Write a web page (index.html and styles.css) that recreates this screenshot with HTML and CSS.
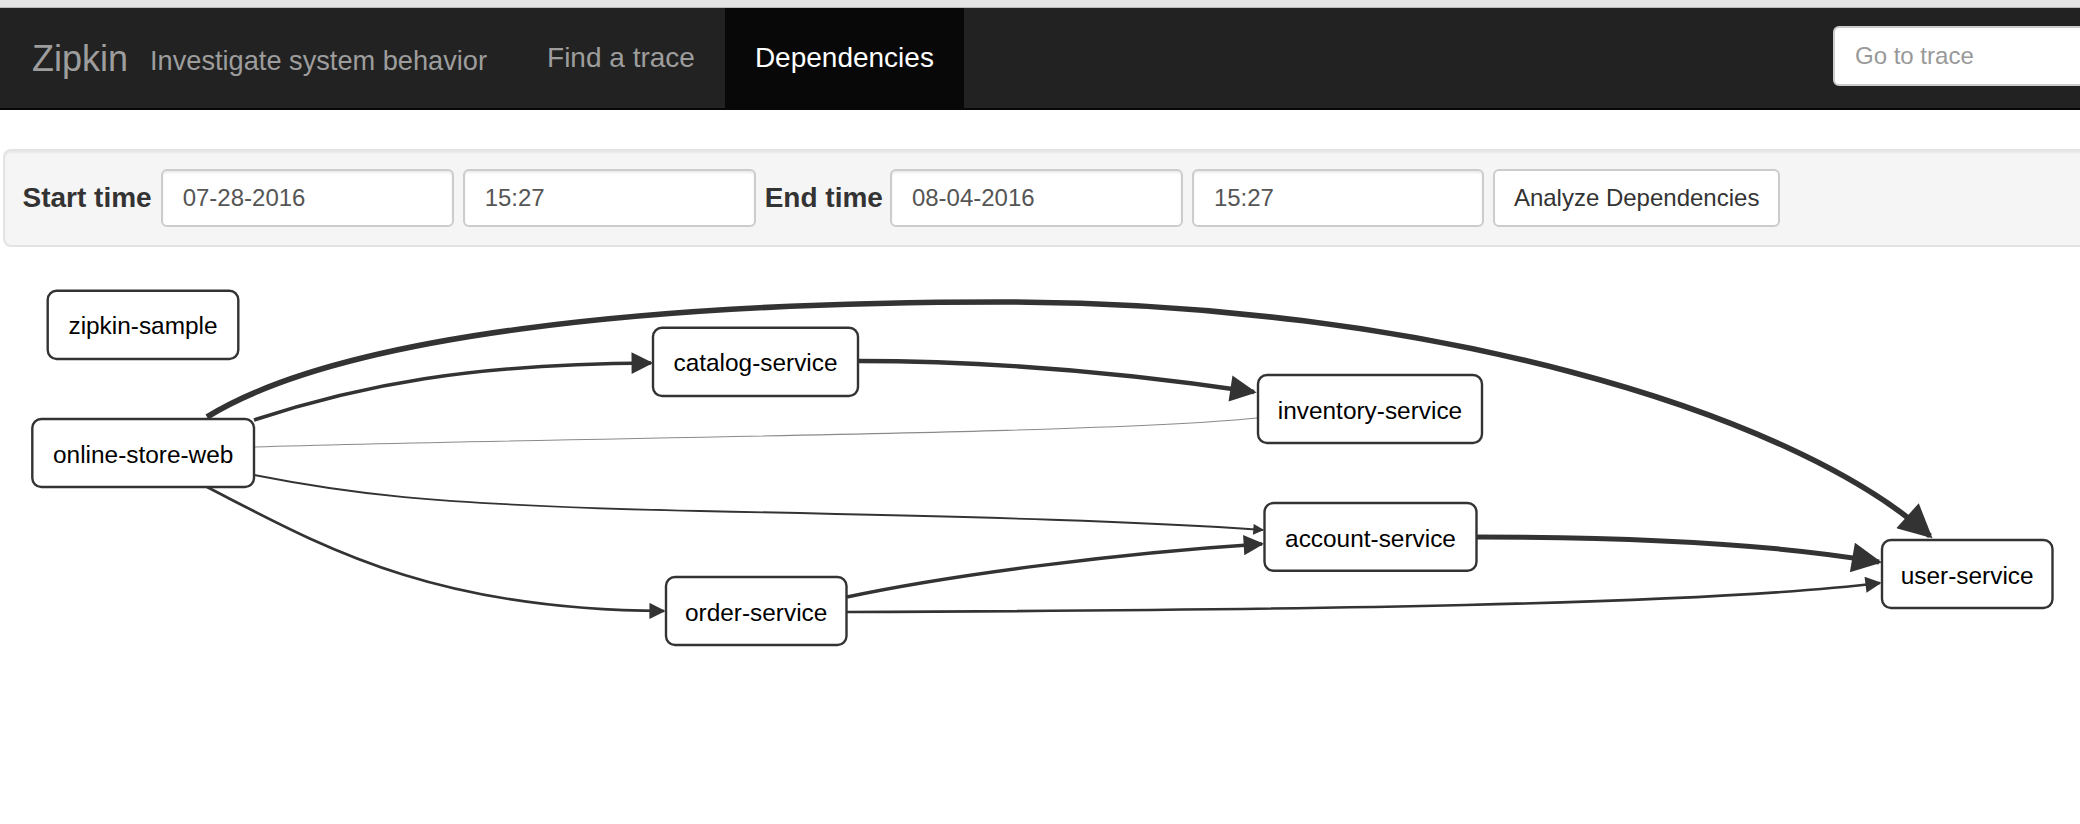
FILE: index.html
```html
<!DOCTYPE html>
<html lang="en">
<head>
<meta charset="utf-8">
<title>Zipkin - Dependencies</title>
<link rel="stylesheet" href="styles.css">
</head>
<body>
<div class="browser-strip"></div>
<nav class="navbar">
  <a class="brand" href="#">Zipkin</a>
  <span class="tagline">Investigate system behavior</span>
  <ul class="nav">
    <li><a href="#">Find a trace</a></li>
    <li class="active"><a href="#">Dependencies</a></li>
  </ul>
  <form class="search">
    <input class="search-input" type="text" placeholder="Go to trace">
  </form>
</nav>
<main class="content">
  <form class="well">
    <label class="field-label">Start time</label>
    <input class="form-control" type="text" value="07-28-2016">
    <input class="form-control" type="text" value="15:27">
    <label class="field-label field-label-end">End time</label>
    <input class="form-control" type="text" value="08-04-2016">
    <input class="form-control form-control-last" type="text" value="15:27">
    <button class="btn" type="button">Analyze Dependencies</button>
  </form>
  <div class="graph">
    <svg class="graph-svg" width="2080" height="577" viewBox="0 247 2080 577">
      <defs>
        <marker id="arrowhead" viewBox="0 0 10 10" refX="9" refY="5" markerUnits="strokeWidth" markerWidth="8" markerHeight="6" orient="auto">
          <path d="M 0 0 L 10 5 L 0 10 z" class="arrow"/>
        </marker>
      </defs>
      <g class="edges">
        <path class="edge" stroke-width="5.6" d="M207,417 C340,335 650,302 1002,302 C1420,302 1790,410 1930,536"/>
        <path class="edge" stroke-width="3.6" d="M254,420 C360,385 470,364 651,363"/>
        <path class="edge" stroke-width="4.4" d="M858,361 C980,361 1120,372 1254,392"/>
        <path class="edge edge-faint" stroke-width="1.1" d="M254,447 C600,437 1100,434 1257,418"/>
        <path class="edge" stroke-width="1.8" d="M254,475 C340,492 420,505 700,511 C1000,517 1150,522 1263,530"/>
        <path class="edge" stroke-width="2.7" d="M207,487 C320,545 430,610 664,611"/>
        <path class="edge" stroke-width="3.4" d="M847,597 C950,575 1120,553 1262,544"/>
        <path class="edge" stroke-width="2.7" d="M847,612 C1300,610 1700,605 1880,583"/>
        <path class="edge" stroke-width="5" d="M1476,537 C1650,537 1780,545 1879,562"/>
      </g>
      <g class="nodes">
        <g class="node">
          <rect x="47.7" y="290.7" width="190.6" height="68.3" rx="9"/>
          <text x="143" y="334">zipkin-sample</text>
        </g>
        <g class="node">
          <rect x="32.3" y="419" width="221.7" height="68" rx="9"/>
          <text x="143.2" y="462.5">online-store-web</text>
        </g>
        <g class="node">
          <rect x="653" y="327.7" width="205" height="68.3" rx="9"/>
          <text x="755.5" y="371">catalog-service</text>
        </g>
        <g class="node">
          <rect x="1258" y="375" width="224" height="68" rx="9"/>
          <text x="1370" y="418.5">inventory-service</text>
        </g>
        <g class="node">
          <rect x="1264.5" y="503" width="212" height="67.7" rx="9"/>
          <text x="1370.5" y="546.5">account-service</text>
        </g>
        <g class="node">
          <rect x="666" y="577" width="180.5" height="68" rx="9"/>
          <text x="756.2" y="620.5">order-service</text>
        </g>
        <g class="node">
          <rect x="1882" y="540" width="170.5" height="68" rx="9"/>
          <text x="1967.2" y="583.5">user-service</text>
        </g>
      </g>
    </svg>
  </div>
</main>
</body>
</html>
```

FILE: styles.css
```css
* {
  box-sizing: border-box;
}

html, body {
  margin: 0;
  padding: 0;
  width: 2080px;
  height: 824px;
  overflow: hidden;
  background: #fff;
  font-family: "Liberation Sans", Arial, Helvetica, sans-serif;
  color: #333;
}

.browser-strip {
  height: 8px;
  background: #e4e4e4;
  border-bottom: 1px solid #b9b9b9;
}

.navbar {
  display: flex;
  align-items: flex-start;
  height: 102px;
  background: #222;
  border-bottom: 2px solid #080808;
  overflow: hidden;
}

.brand {
  display: block;
  padding: 31px 0 0 32px;
  font-size: 36px;
  line-height: 40px;
  color: #9d9d9d;
  text-decoration: none;
}

.tagline {
  display: block;
  margin-left: 22px;
  padding-top: 33px;
  font-size: 27.2px;
  line-height: 40px;
  color: #9d9d9d;
  white-space: nowrap;
}

.nav {
  display: flex;
  margin: 0 0 0 30px;
  padding: 0;
  list-style: none;
}

.nav a {
  display: block;
  padding: 30px 30px;
  font-size: 28px;
  line-height: 40px;
  color: #9d9d9d;
  text-decoration: none;
  white-space: nowrap;
}

.nav .active a {
  background: #080808;
  color: #fff;
}

.search {
  margin: 18px -33px 0 auto;
}

.search-input {
  display: block;
  width: 280px;
  height: 60px;
  padding: 0 20px;
  border: 2px solid #ccc;
  border-radius: 6px;
  background: #fff;
  font-family: inherit;
  font-size: 24px;
  color: #555;
}

.search-input::placeholder {
  color: #999;
}

.content {
  display: block;
}

.well {
  display: flex;
  align-items: center;
  gap: 9px;
  margin: 39px -30px 0 3px;
  padding: 18px 18px 18px 17.5px;
  background: #f5f5f5;
  border: 2px solid #e3e3e3;
  border-radius: 8px;
  box-shadow: inset 0 2px 2px rgba(0, 0, 0, 0.05);
}

.field-label {
  font-size: 28px;
  font-weight: bold;
  line-height: 40px;
  color: #333;
  white-space: nowrap;
}

.field-label-end {
  margin-right: -2px;
}

.form-control {
  display: block;
  width: 293px;
  height: 58px;
  padding: 0 20px;
  border: 2px solid #ccc;
  border-radius: 6px;
  background: #fff;
  box-shadow: inset 0 2px 2px rgba(0, 0, 0, 0.075);
  font-family: inherit;
  font-size: 24px;
  color: #555;
}

.form-control-last {
  width: 292px;
}

.btn {
  display: block;
  height: 58px;
  padding: 0 19px;
  border: 2px solid #ccc;
  border-radius: 6px;
  background: #fff;
  font-family: inherit;
  font-size: 24px;
  color: #333;
  white-space: nowrap;
}

.graph {
  display: block;
}

.graph-svg {
  display: block;
}

.edge {
  fill: none;
  stroke: #333;
  marker-end: url(#arrowhead);
}

.edge-faint {
  stroke: #8a8a8a;
  marker-end: none;
}

.arrow {
  fill: #333;
}

.node rect {
  fill: #fff;
  stroke: #333;
  stroke-width: 2.4px;
}

.node text {
  font-family: "Liberation Sans", Arial, Helvetica, sans-serif;
  font-size: 24.4px;
  fill: #000;
  text-anchor: middle;
}
```
